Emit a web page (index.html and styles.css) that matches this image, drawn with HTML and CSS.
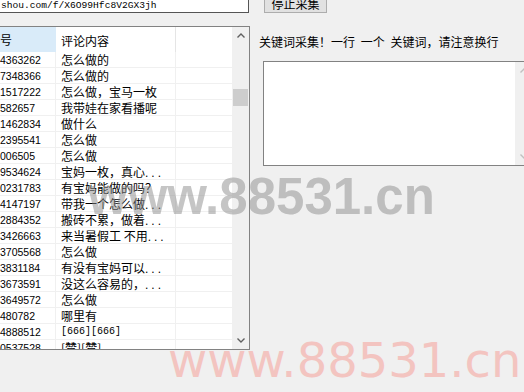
FILE: index.html
```html
<!DOCTYPE html>
<html>
	<head>
		<meta charset="UTF-8">
		<title>评论采集</title>
		<link rel="stylesheet" href="styles.css">
	</head>
	<body>
		<div class="app">
			<div class="left">
				<div class="urlbox">shou.com/f/X6O99Hfc8V2GX3jh</div>
				<div class="list">
					<div class="grid">
						<div class="row head">
							<div class="c1 sel">号</div>
							<div class="c2">评论内容</div>
							<div class="c3"></div>
						</div>
						<div class="row"><div class="c1">4363262</div><div class="c2">怎么做的</div><div class="c3"></div></div>
						<div class="row"><div class="c1">7348366</div><div class="c2">怎么做的</div><div class="c3"></div></div>
						<div class="row"><div class="c1">1517222</div><div class="c2">怎么做，宝马一枚</div><div class="c3"></div></div>
						<div class="row"><div class="c1">582657</div><div class="c2">我带娃在家看播呢</div><div class="c3"></div></div>
						<div class="row"><div class="c1">1462834</div><div class="c2">做什么</div><div class="c3"></div></div>
						<div class="row"><div class="c1">2395541</div><div class="c2">怎么做</div><div class="c3"></div></div>
						<div class="row"><div class="c1">006505</div><div class="c2">怎么做</div><div class="c3"></div></div>
						<div class="row"><div class="c1">9534624</div><div class="c2">宝妈一枚，真心<span class="dots">...</span></div><div class="c3"></div></div>
						<div class="row"><div class="c1">0231783</div><div class="c2">有宝妈能做的吗？</div><div class="c3"></div></div>
						<div class="row"><div class="c1">4147197</div><div class="c2">带我一个怎么做<span class="dots">...</span></div><div class="c3"></div></div>
						<div class="row"><div class="c1">2884352</div><div class="c2">搬砖不累，做着<span class="dots">...</span></div><div class="c3"></div></div>
						<div class="row"><div class="c1">3426663</div><div class="c2">来当暑假工 不用<span class="dots">...</span></div><div class="c3"></div></div>
						<div class="row"><div class="c1">3705568</div><div class="c2">怎么做</div><div class="c3"></div></div>
						<div class="row"><div class="c1">3831184</div><div class="c2">有没有宝妈可以<span class="dots">...</span></div><div class="c3"></div></div>
						<div class="row"><div class="c1">3673591</div><div class="c2">没这么容易的，<span class="dots">...</span></div><div class="c3"></div></div>
						<div class="row"><div class="c1">3649572</div><div class="c2">怎么做</div><div class="c3"></div></div>
						<div class="row"><div class="c1">480782</div><div class="c2">哪里有</div><div class="c3"></div></div>
						<div class="row"><div class="c1">4888512</div><div class="c2 ascii">[666][666]</div><div class="c3"></div></div>
						<div class="row"><div class="c1">0537528</div><div class="c2">[赞][赞]</div><div class="c3"></div></div>
					</div>
					<div class="vscroll">
						<div class="arrow">
							<svg width="8" height="5" viewBox="0 0 8 5"><polyline points="0.5,4.5 4,1 7.5,4.5" fill="none" stroke="#606060" stroke-width="1.4"/></svg>
						</div>
						<div class="track"><div class="thumb"></div></div>
						<div class="arrow">
							<svg width="8" height="5" viewBox="0 0 8 5"><polyline points="0.5,0.5 4,4 7.5,0.5" fill="none" stroke="#606060" stroke-width="1.4"/></svg>
						</div>
					</div>
				</div>
			</div>
			<div class="right">
				<button class="stop">停止采集</button>
				<div class="label">关键词采集！一行 一个 关键词，请注意换行</div>
				<div class="keywords">
					<div class="kw-text"></div>
					<div class="vscroll off">
						<div class="arrow">
							<svg width="8" height="5" viewBox="0 0 8 5"><polyline points="0.5,4.5 4,1 7.5,4.5" fill="none" stroke="#c0c0c0" stroke-width="1.4"/></svg>
						</div>
						<div class="track"></div>
						<div class="arrow">
							<svg width="8" height="5" viewBox="0 0 8 5"><polyline points="0.5,0.5 4,4 7.5,0.5" fill="none" stroke="#c0c0c0" stroke-width="1.4"/></svg>
						</div>
					</div>
				</div>
			</div>
		</div>
		<div class="mark mark-gray">www.88531.cn</div>
		<div class="mark mark-pink">www.88531.cn</div>
	</body>
</html>
```

FILE: styles.css
```css
html, body {
	margin: 0;
	height: 100%;
	overflow: hidden;
}
body {
	background: #f0f0f0;
	font: 12px "Noto Sans CJK SC", sans-serif;
	color: #000;
	position: relative;
}
.app {
	display: flex;
	align-items: flex-start;
}
.left {
	width: 250px;
	flex: none;
}
.urlbox {
	box-sizing: border-box;
	width: 251px;
	height: 25px;
	margin: -12px 0 0 -2px;
	padding: 12px 0 0 2px;
	background: #fff;
	border: 1px solid #555;
	border-top: 0;
	font: 9.6px/12px "Liberation Mono", monospace;
	white-space: nowrap;
	overflow: hidden;
}
.list {
	box-sizing: border-box;
	width: 252px;
	height: 324px;
	margin: 13px 0 0 -2px;
	border: 1px solid #828282;
	background: #fff;
	display: flex;
	overflow: hidden;
}
.grid {
	width: 233px;
	flex: none;
}
.row {
	display: flex;
	height: 16px;
	line-height: 16px;
}
.row > div {
	box-sizing: border-box;
	border-right: 1px solid #f0f0f0;
	border-bottom: 1px solid #f0f0f0;
	white-space: nowrap;
	overflow: hidden;
}
.c1 {
	width: 57px;
	padding-left: 1px;
	font: 10.5px/16px "Liberation Sans", sans-serif;
}
.c2 {
	width: 120px;
	padding-left: 5px;
}
.c2.ascii {
	font: 10px/16px "Liberation Mono", monospace;
}
.c3 {
	flex: 1;
	border-right: 0 !important;
}
.row.head {
	height: 25px;
	line-height: 25px;
}
.row.head > div {
	border-bottom: 0;
	padding-top: 1px;
}
.row.head .c1 {
	font: 12px/24px "Noto Sans CJK SC", sans-serif;
	border-right: 0;
	padding-left: 1px;
}
.row.head .c2 {
	border-right-color: #e5e5e5;
}
.sel {
	background: #d9ebf9;
}
.dots {
	font-family: "Liberation Sans", sans-serif;
	letter-spacing: 3px;
}
.vscroll {
	width: 17px;
	flex: none;
	background: #f0f0f0;
	display: flex;
	flex-direction: column;
}
.arrow {
	height: 17px;
	display: flex;
	align-items: center;
	justify-content: center;
}
.track {
	flex: 1;
}
.thumb {
	width: 15px;
	height: 17px;
	margin: 45px 0 0 1px;
	background: #cdcdcd;
}
.right {
	flex: 1;
	display: flex;
	flex-direction: column;
	align-items: flex-start;
}
.stop {
	box-sizing: border-box;
	width: 63px;
	height: 23px;
	margin: -10px 0 0 14px;
	padding: 4px 0 0;
	background: #e1e1e1;
	border: 1px solid #adadad;
	border-radius: 0;
	font: 12px/16px "Noto Sans CJK SC", sans-serif;
	color: #000;
}
.label {
	margin: 21px 0 0 9px;
	line-height: 16px;
	word-spacing: 3px;
	white-space: nowrap;
}
.keywords {
	box-sizing: border-box;
	width: 270px;
	height: 105px;
	margin: 11px 0 0 13px;
	border: 1px solid #828282;
	background: #fff;
	display: flex;
}
.kw-text {
	flex: 1;
}
.mark {
	position: absolute;
	white-space: nowrap;
	line-height: 1;
	pointer-events: none;
}
.mark-gray {
	left: 88px;
	top: 171px;
	font: bold 51px/1 "Liberation Sans", sans-serif;
	color: rgba(140, 140, 140, 0.5);
}
.mark-pink {
	left: 168px;
	top: 336px;
	font: 48px/1 "DejaVu Sans", sans-serif;
	color: #f3c4c0;
}
```
